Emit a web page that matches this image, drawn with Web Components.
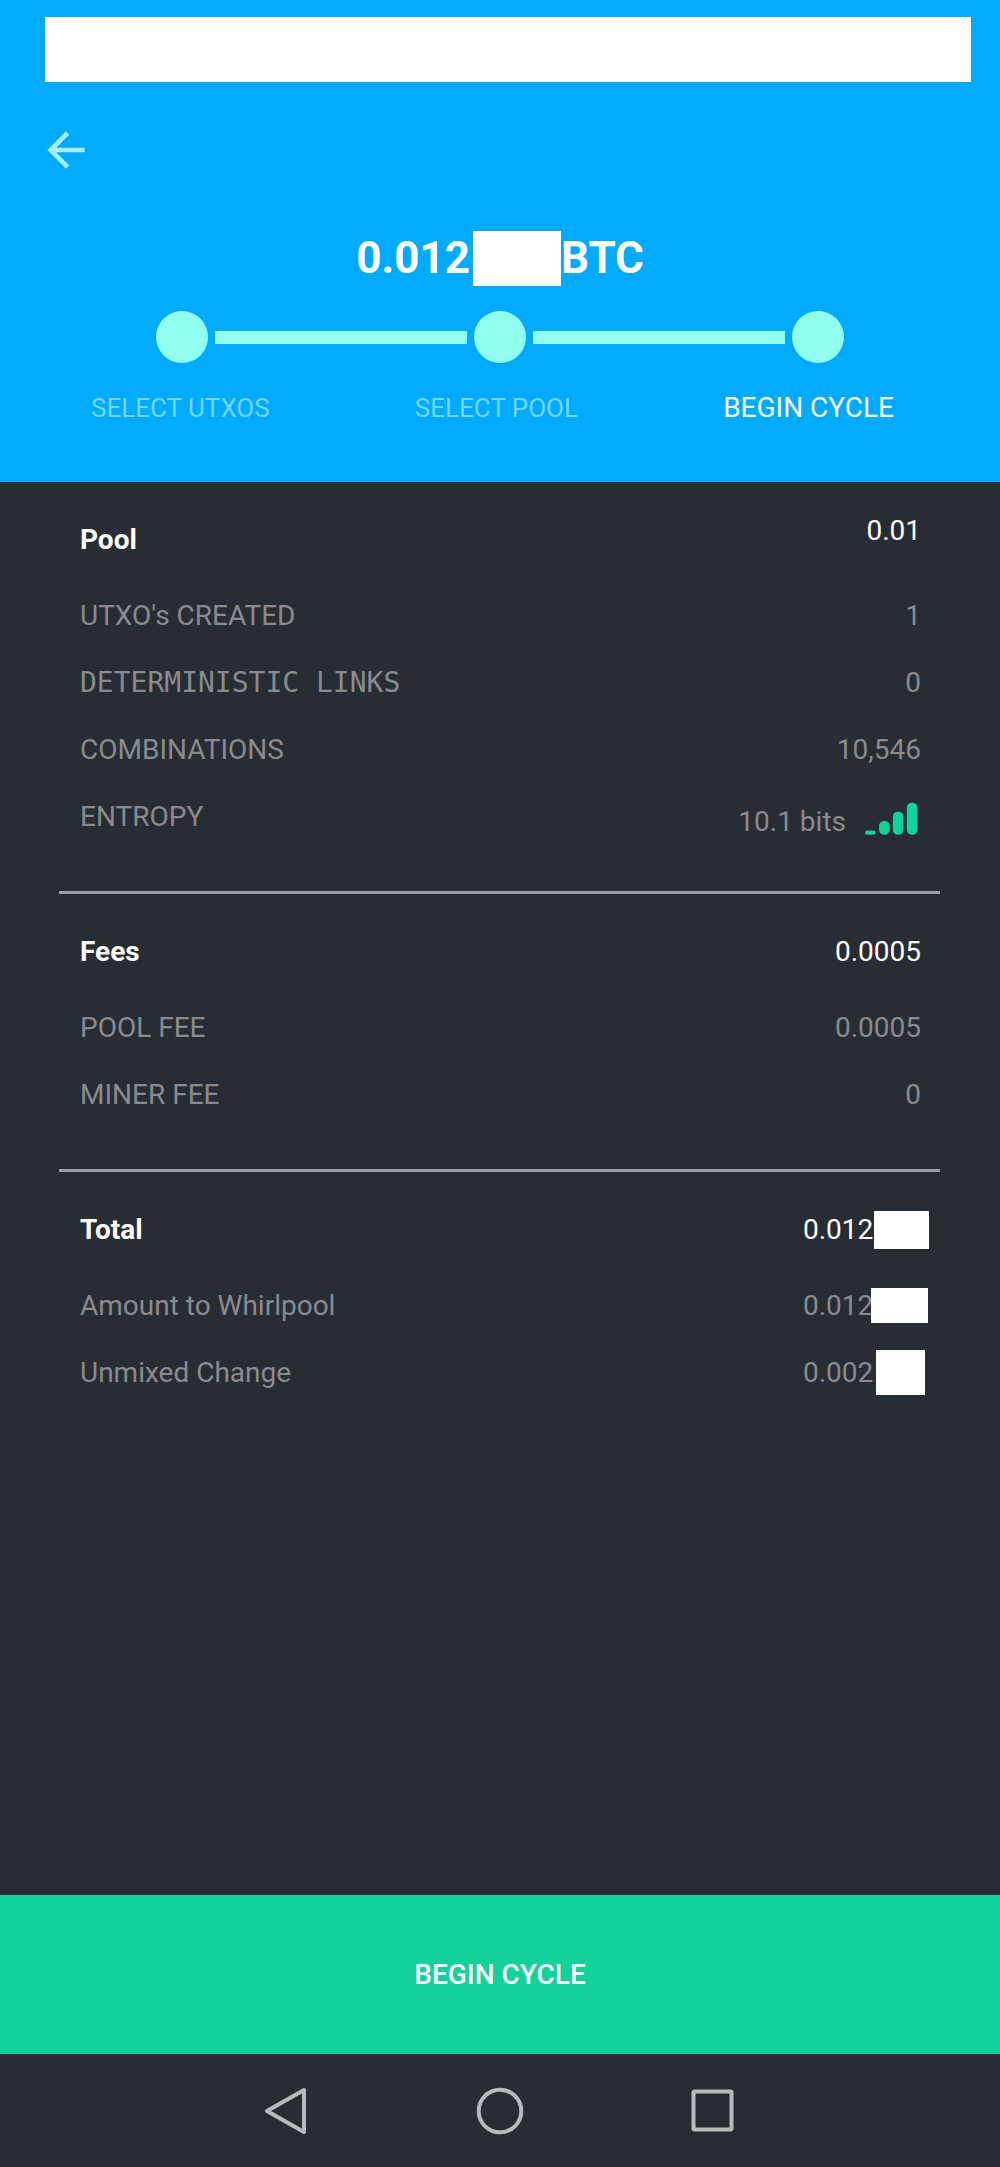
<!DOCTYPE html>
<html lang="en">
<head>
<meta charset="utf-8">
<meta name="viewport" content="width=device-width, initial-scale=1">
<title>Whirlpool – Begin cycle</title>
<style>
  :root {
    --blue: #00aaff;
    --mint: #91ffee;
    --green: #10d29a;
    --surface: #282c33;
    --muted: #898b8e;
    --rule: #9a9fa3;
  }
  body { margin: 0; background: var(--surface); color: #fff; font: 28px/67px Roboto, sans-serif; }
</style>
</head>
<body>
<whirlpool-screen>
  <cycle-header slot="header">
    <amount-title slot="title" unit="BTC">0.012</amount-title>
    <cycle-steps>
      <span>SELECT UTXOS</span>
      <span>SELECT POOL</span>
      <span aria-current="step">BEGIN CYCLE</span>
    </cycle-steps>
  </cycle-header>

  <summary-section heading="Pool">
    <span slot="total" class="raised">0.01</span>
    <summary-row label="UTXO's CREATED">1</summary-row>
    <summary-row label="DETERMINISTIC LINKS" mono>0</summary-row>
    <summary-row label="COMBINATIONS">10,546</summary-row>
    <summary-row label="ENTROPY" metered>10.1 bits<signal-bars></signal-bars></summary-row>
  </summary-section>
  <summary-section heading="Fees">
    <span slot="total">0.0005</span>
    <summary-row label="POOL FEE">0.0005</summary-row>
    <summary-row label="MINER FEE">0</summary-row>
  </summary-section>
  <summary-section heading="Total">
    <masked-value slot="total" style="--left:71px;--width:55px;--height:38px">0.012</masked-value>
    <summary-row label="Amount to Whirlpool"><masked-value style="--left:68px;--width:57px;--height:35px">0.012</masked-value></summary-row>
    <summary-row label="Unmixed Change"><masked-value style="--left:73px;--width:49px;--height:45px">0.002</masked-value></summary-row>
  </summary-section>

  <action-button slot="footer">BEGIN CYCLE</action-button>
  <system-nav slot="footer"></system-nav>
</whirlpool-screen>

<script>
  function define(name, markup, setup) {
    const template = document.createElement('template');
    template.innerHTML = markup;
    customElements.define(name, class extends HTMLElement {
      constructor() {
        super();
        this.attachShadow({ mode: 'open' }).append(template.content.cloneNode(true));
      }
      connectedCallback() { if (setup) setup(this, this.shadowRoot); }
    });
  }

  define('whirlpool-screen', `
    <style>
      :host { display: flex; flex-direction: column; min-height: 100vh; }
      main { flex: 1; padding: 0 60px 0 59px; }
    </style>
    <slot name="header"></slot>
    <main><slot></slot></main>
    <slot name="footer"></slot>`);

  define('cycle-header', `
    <style>
      :host { display: block; background: var(--blue); padding: 17px 0 58px; }
      .status { height: 65px; margin: 0 29px 0 45px; background: #fff; }
      button { display: block; margin: 40px 0 53px 38px; padding: 0; border: 0; background: none; color: #a8ecff; }
      svg { display: block; width: 56px; height: 56px; }
    </style>
    <div class="status"></div>
    <button aria-label="Back"><svg viewBox="0 0 24 24" fill="currentColor"><path d="M20 11H7.83l5.59-5.59L12 4l-8 8 8 8 1.41-1.41L7.83 13H20z"/></svg></button>
    <slot name="title"></slot>
    <slot></slot>`);

  define('amount-title', `
    <style>
      :host { display: block; }
      h1 { display: flex; justify-content: center; margin: 0; font-size: 44px; line-height: 54px; font-weight: 700; height: 55px; }
      .mask { width: 88px; margin-left: 3px; background: #fff; }
    </style>
    <h1><slot></slot><span class="mask"></span><span class="unit"></span></h1>`,
    (el, root) => { root.querySelector('.unit').textContent = el.getAttribute('unit'); });

  define('cycle-steps', `
    <style>
      :host { display: block; margin-top: 25px; }
      .rail { display: flex; align-items: center; gap: 7px; padding: 0 156px; margin-bottom: 29px; }
      .dot { width: 52px; height: 52px; border-radius: 50%; background: var(--mint); }
      .line { flex: 1; height: 13px; background: var(--mint); }
      .labels { display: flex; justify-content: space-between; padding: 0 106px 0 91px; line-height: 32px; }
      ::slotted(*) { color: #73d8ff; font-size: 26px; }
      ::slotted([aria-current]) { color: #fff; font-size: 28px; }
    </style>
    <div class="rail"><span class="dot"></span><span class="line"></span><span class="dot"></span><span class="line"></span><span class="dot"></span></div>
    <div class="labels"><slot></slot></div>`);

  define('summary-section', `
    <style>
      :host { display: block; padding: 24px 19px 41px 21px; border-bottom: 3px solid var(--rule); }
      :host(:last-of-type) { border-bottom: 0; }
      header { display: flex; justify-content: space-between; margin-bottom: 9px; }
      h2 { margin: 0; font-size: 28px; font-weight: 700; }
      ::slotted(.raised) { line-height: 49px; }
    </style>
    <header><h2></h2><slot name="total"></slot></header>
    <slot></slot>`,
    (el, root) => { root.querySelector('h2').textContent = el.getAttribute('heading'); });

  define('summary-row', `
    <style>
      :host { display: flex; justify-content: space-between; height: 67px; color: var(--muted); }
      :host([mono]) .label { font-family: "DejaVu Sans Mono", monospace; }
      .value { display: flex; align-items: center; }
      :host([metered]) .value { padding-top: 10px; }
    </style>
    <span class="label"></span><span class="value"><slot></slot></span>`,
    (el, root) => { root.querySelector('.label').textContent = el.getAttribute('label'); });

  define('signal-bars', `
    <style>
      :host { display: block; margin: 0 3px 6px 19px; }
      svg { display: block; width: 53px; height: 33px; fill: var(--green); }
    </style>
    <svg viewBox="0 0 53 33" aria-hidden="true">
      <rect x="0" y="28.4" width="10.7" height="4.4" rx="2.2"/>
      <rect x="14" y="18.8" width="10.7" height="14" rx="5.3"/>
      <rect x="27.8" y="9.5" width="10.7" height="23.3" rx="5.3"/>
      <rect x="41.8" y="0.5" width="10.7" height="32.3" rx="5.3"/>
    </svg>`);

  define('masked-value', `
    <style>
      :host { display: flex; align-items: center; position: relative; width: 118px; height: 67px; }
      .mask { position: absolute; left: var(--left); width: var(--width); height: var(--height); background: #fff; }
    </style>
    <slot></slot><span class="mask"></span>`);

  define('action-button', `
    <style>
      :host { display: block; }
      button { display: block; width: 100%; height: 159px; padding: 0; border: 0; background: var(--green); color: #fff; font: 500 28px/32px Roboto, sans-serif; }
    </style>
    <button><slot></slot></button>`);

  define('system-nav', `
    <style>
      :host { display: block; }
      nav { display: grid; grid-template-columns: repeat(3, 1fr); align-items: center; justify-items: center; height: 113px; padding: 0 18%; }
      button { padding: 0; border: 0; background: none; }
      svg { display: block; width: 48px; height: 48px; fill: none; stroke: #b9babc; stroke-width: 4; stroke-linejoin: round; }
    </style>
    <nav>
      <button aria-label="Back"><svg viewBox="0 0 48 48"><path d="M41 3v42L4 24z"/></svg></button>
      <button aria-label="Home"><svg viewBox="0 0 48 48"><circle cx="24" cy="24" r="21.3"/></svg></button>
      <button aria-label="Recent apps"><svg viewBox="0 0 48 48"><rect x="4.5" y="4.5" width="38" height="38" rx="1"/></svg></button>
    </nav>`);
</script>
</body>
</html>
